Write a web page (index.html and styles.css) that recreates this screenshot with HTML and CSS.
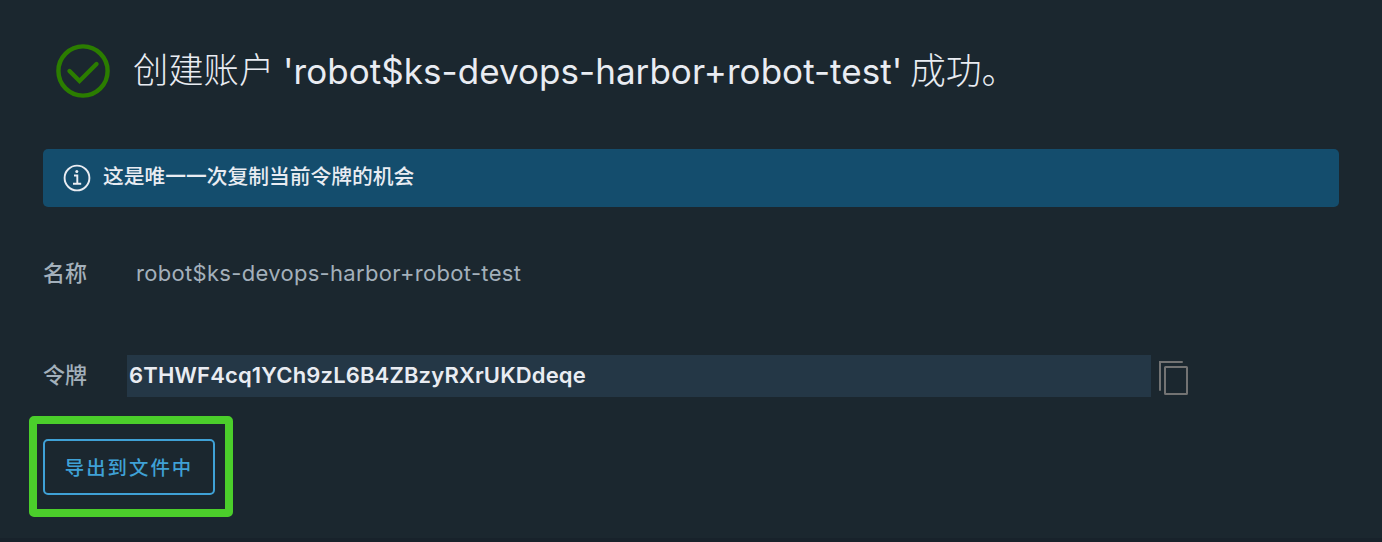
FILE: index.html
```html
<!DOCTYPE html>
<html lang="zh-CN">
<head>
<meta charset="utf-8">
<title>Robot account</title>
<link rel="stylesheet" href="styles.css">
</head>
<body>
<main class="dialog">
  <header class="header">
    <svg class="success-icon" viewBox="0 0 54 54" fill="none" stroke="currentColor">
      <circle cx="27" cy="27" r="24.6" stroke-width="4.4"/>
      <path d="M13.5 27 23.5 37 40.5 20" stroke-width="4.4" stroke-linecap="round"/>
    </svg>
    <h1 class="title"><span class="title-start">创建账户</span><span class="title-name">'robot$ks-devops-harbor+robot-test'</span><span class="title-end">成功。</span></h1>
  </header>
  <div class="alert">
    <svg class="info-icon" viewBox="0 0 28 28" fill="none" stroke="currentColor">
      <circle cx="14" cy="14" r="12.4" stroke-width="1.9"/>
      <path d="M11 11.5h3.3v8M10 19.8h8.2" stroke-width="1.9"/>
      <circle cx="13.8" cy="7.6" r="1.5" fill="currentColor" stroke="none"/>
    </svg>
    <span class="alert-text">这是唯一一次复制当前令牌的机会</span>
  </div>
  <div class="row name-row">
    <span class="label">名称</span>
    <span class="name">robot$ks-devops-harbor+robot-test</span>
  </div>
  <div class="row token-row">
    <span class="label">令牌</span>
    <div class="token-field"><span class="token">6THWF4cq1YCh9zL6B4ZBzyRXrUKDdeqe</span></div>
    <svg class="copy-icon" viewBox="0 0 32 36" fill="none" stroke="currentColor" stroke-width="2">
      <path d="M2 30V2h22" stroke-linecap="round"/>
      <rect x="7" y="7" width="22" height="27" rx=".5"/>
    </svg>
  </div>
  <div class="highlight">
    <button class="export" type="button">导出到文件中</button>
  </div>
</main>
</body>
</html>
```
FILE: styles.css
```css
* { box-sizing: border-box; }
body {
  margin: 0;
  background: #1b272f;
  font-family: Inter, "Noto Sans CJK SC", sans-serif;
}
.dialog {
  display: flex;
  flex-direction: column;
  align-items: flex-start;
  height: 542px;
  padding: 43px 43px 0;
  border-bottom: 4px solid #18222b;
  color: #e9ecf2;
}
.header {
  display: flex;
  gap: 23px;
  height: 106px;
  padding-left: 13px;
}
.success-icon { width: 54px; height: 54px; flex: none; margin-top: 1px; color: #2b7d00; }
.title {
  display: flex;
  margin: 0;
  height: 56px;
  font-size: 35.3px;
  line-height: 56px;
  font-weight: 300;
  white-space: nowrap;
}
.title-start { width: 150px; }
.title-name { width: 627px; font-size: 35px; font-weight: 400; letter-spacing: .05px; }
.title-end { font-size: 35.8px; }
.alert {
  display: flex;
  width: 100%;
  height: 58px;
  padding: 15px 20px;
  gap: 12px;
  border-radius: 5px;
  background: #144d6d;
}
.info-icon { width: 28px; height: 28px; }
.alert-text { font-size: 20.75px; line-height: 25px; font-weight: 500; }
.row { display: flex; color: #a3b0bb; font-size: 22px; }
.label { width: 84px; font-weight: 500; }
.name-row { height: 42px; margin-top: 45px; line-height: 42px; }
.name { padding-left: 9px; letter-spacing: .31px; }
.token-row { height: 42px; margin-top: 61px; line-height: 41px; }
.token-field { width: 1024px; padding-left: 2px; background: #243746; color: #e9ecf2; }
.token { font-weight: 600; letter-spacing: .16px; }
.copy-icon { width: 32px; height: 36px; margin: 5px 0 0 7px; color: #737373; }
.highlight {
  width: 204.5px;
  height: 101px;
  margin: 19px 0 0 -14.5px;
  padding: 15px 6.5px;
  border: 8px solid #4bce2b;
  border-radius: 5px;
}
.export {
  display: block;
  width: 172px;
  height: 56px;
  padding: 2px 0 0;
  border: 2px solid #3fa1d6;
  border-radius: 5px;
  background: transparent;
  color: #3fa1d6;
  font: 500 19.4px/50px Inter, "Noto Sans CJK SC", sans-serif;
  letter-spacing: 2px;
}
```
